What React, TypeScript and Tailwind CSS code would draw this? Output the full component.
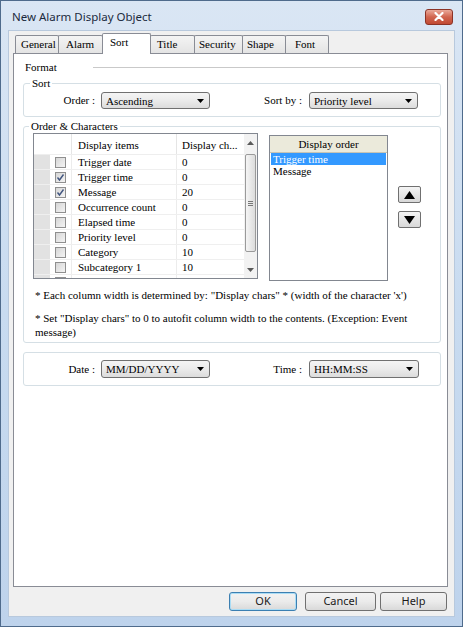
const serif = "[font-family:'Liberation_Serif','Times_New_Roman',serif] text-[11px] text-black"
const ui = "[font-family:'Noto_Sans','Liberation_Sans',sans-serif]"

const tabs = [
  { label: 'General', cls: 'w-[44px] pl-[5px]' },
  { label: 'Alarm', cls: 'w-[45px] pl-[7px]' },
  { label: 'Sort', cls: 'w-[49px] pl-[7px]', active: true },
  { label: 'Title', cls: 'w-[45px] pl-[6px]' },
  { label: 'Security', cls: 'w-[49px] pl-[4px]' },
  { label: 'Shape', cls: 'w-[44px] pl-[4px]' },
  { label: 'Font', cls: 'w-[44px] pl-[9px]' },
]

const items = [
  { name: 'Trigger date', chars: '0', checked: false },
  { name: 'Trigger time', chars: '0', checked: true },
  { name: 'Message', chars: '20', checked: true },
  { name: 'Occurrence count', chars: '0', checked: false },
  { name: 'Elapsed time', chars: '0', checked: false },
  { name: 'Priority level', chars: '0', checked: false },
  { name: 'Category', chars: '10', checked: false },
  { name: 'Subcategory 1', chars: '10', checked: false },
  { name: 'Subcategory 2', chars: '10', checked: false },
]

function DownTri({ w = 7, h = 4, color = '#000' }: { w?: number; h?: number; color?: string }) {
  return (
    <svg width={w} height={h} viewBox={`0 0 ${w} ${h}`}>
      <polygon points={`0,0 ${w},0 ${w / 2},${h}`} fill={color} />
    </svg>
  )
}

function UpTri({ w = 7, h = 4, color = '#000' }: { w?: number; h?: number; color?: string }) {
  return (
    <svg width={w} height={h} viewBox={`0 0 ${w} ${h}`}>
      <polygon points={`0,${h} ${w},${h} ${w / 2},0`} fill={color} />
    </svg>
  )
}

function Combo({ value, className }: { value: string; className: string }) {
  return (
    <div
      className={`flex items-center justify-between rounded-[3px] border border-[#707070] bg-linear-to-b from-[#f4f4f4] via-[#ebebeb] to-[#dcdcdc] pl-[4px] pr-[5px] ${className}`}
    >
      <span className="leading-[14px]">{value}</span>
      <DownTri />
    </div>
  )
}

function CheckBox({ checked }: { checked: boolean }) {
  return (
    <div className="flex h-[11px] w-[11px] items-center justify-center border border-[#8f8f8f] bg-linear-to-br from-[#d6d6d6] to-[#f4f4f4]">
      {checked && (
        <svg width="9" height="9" viewBox="0 0 9 9">
          <path d="M1.5 4.5 L3.5 7 L7.5 1.5" stroke="#41557f" strokeWidth="1.4" fill="none" />
        </svg>
      )}
    </div>
  )
}

function DlgButton({ label, className }: { label: string; className: string }) {
  return (
    <div
      className={`flex h-[19px] items-center justify-center rounded-[3px] border bg-linear-to-b from-[#f2f2f2] via-[#ebebeb] to-[#d9d9d9] text-[11px] text-[#1a1a1a] ${ui} ${className}`}
    >
      {label}
    </div>
  )
}

function ItemsTable() {
  return (
    <div className="flex h-[146px] w-[225px] overflow-hidden border border-[#828790] bg-white">
      <div className="w-[210px] overflow-hidden">
        <div className="flex h-[21px] border-b border-[#eeeeee]">
          <div className="w-[38px] border-r border-[#e5e5e5]" />
          <div className="w-[105px] border-r border-[#e5e5e5] pt-[4px] pl-[6px] leading-[14px]">Display items</div>
          <div className="flex-1 pt-[4px] pl-[5px] leading-[14px] whitespace-nowrap">Display ch...</div>
        </div>
        {items.map((it) => (
          <div key={it.name} className="flex h-[15px] border-b border-[#efefef]">
            <div className="w-[16px] bg-[#e2e2e2]" />
            <div className="flex w-[22px] items-center justify-center border-r border-[#ececec]">
              <CheckBox checked={it.checked} />
            </div>
            <div className="w-[105px] border-r border-[#ececec] pl-[6px] leading-[14px] whitespace-nowrap">{it.name}</div>
            <div className="flex-1 pl-[5px] leading-[14px]">{it.chars}</div>
          </div>
        ))}
      </div>
      <div className="flex w-[13px] flex-col bg-[#f2f2f2]">
        <div className="flex h-[17px] items-center justify-center">
          <UpTri w={7} h={4} color="#5a5a5a" />
        </div>
        <div className="mx-[1px] mt-[3px] flex h-[98px] items-center justify-center rounded-[2px] border border-[#9a9a9a] bg-linear-to-r from-[#f5f5f5] to-[#dcdcdc]">
          <div className="flex flex-col gap-[1px]">
            <div className="h-px w-[5px] bg-[#777]" />
            <div className="h-px w-[5px] bg-[#777]" />
            <div className="h-px w-[5px] bg-[#777]" />
          </div>
        </div>
        <div className="flex-1" />
        <div className="flex h-[17px] items-center justify-center">
          <DownTri w={7} h={4} color="#5a5a5a" />
        </div>
      </div>
    </div>
  )
}

function OrderList() {
  return (
    <div className="mt-[2px] ml-[11px] h-[146px] w-[119px] border border-[#828790] bg-white">
      <div className="h-[17px] border-b border-[#c7c4b4] bg-[#ebeadb] text-center leading-[16px]">Display order</div>
      <div className="px-[1px]">
        <div className="h-[12px] bg-[#3399ff] pl-[2px] leading-[12px] text-white">Trigger time</div>
        <div className="pl-[2px] leading-[13px]">Message</div>
      </div>
    </div>
  )
}

function ArrowButton({ up }: { up?: boolean }) {
  return (
    <div className="flex h-[17px] w-[23px] items-center justify-center rounded-[2px] border border-[#707070] bg-linear-to-b from-[#f4f4f4] to-[#d8d8d8]">
      {up ? <UpTri w={11} h={8} /> : <DownTri w={11} h={8} />}
    </div>
  )
}

export default function App() {
  return (
    <div className="flex h-[627px] w-[463px] flex-col border border-[#4f6b8c] bg-linear-to-b from-[#dae6f4] via-[#c8dbf0] to-[#bed3ec]">
      {/* title bar */}
      <div className="flex h-[29px] items-center justify-between pt-[2px] pr-[9px] pl-[11px]">
        <span className={`text-[11.5px] text-[#1b2a3d] ${ui}`}>New Alarm Display Object</span>
        <div className="flex h-[16px] w-[28px] items-center justify-center rounded-[3px] border border-[#8c3326] bg-linear-to-b from-[#e9a99a] via-[#d1654f] to-[#c14a33]">
          <svg width="10" height="9" viewBox="0 0 10 9">
            <path d="M1.5 1 L8.5 8 M8.5 1 L1.5 8" stroke="#ffffff" strokeWidth="2.2" strokeLinecap="round" />
          </svg>
        </div>
      </div>

      {/* client area */}
      <div className={`mx-[7px] mb-[9px] flex flex-1 flex-col border border-[#b8c9dd] bg-[#f0f0f0] pt-[2px] ${serif}`}>
        <div className="mr-[6px] ml-[4px]">
          <div className="flex h-[20px] items-end pl-[2px]">
            {tabs.map((t) =>
              t.active ? (
                <div
                  key={t.label}
                  className={`relative z-10 -mr-px -mb-px h-[21px] rounded-t-[2px] border border-b-0 border-[#898c95] bg-white pt-[1px] leading-[14px] ${t.cls}`}
                >
                  {t.label}
                </div>
              ) : (
                <div
                  key={t.label}
                  className={`-mr-px h-[18px] rounded-t-[2px] border border-b-0 border-[#898c95] bg-linear-to-b from-[#f4f4f4] to-[#e4e4e4] leading-[17px] ${t.cls}`}
                >
                  {t.label}
                </div>
              ),
            )}
          </div>

          <div className="h-[534px] border border-[#898c95] bg-white">
            {/* Format */}
            <div className="mt-[6px] flex h-[14px] items-center pr-[6px] pl-[11px]">
              <span className="w-[68px] leading-[14px]">Format</span>
              <div className="flex-1 border-t border-[#c9c9c9]" />
            </div>

            {/* Sort */}
            <fieldset className="mt-[2px] ml-[9px] w-[418px] rounded-[3px] border border-[#d5dfe5] pt-[2px] pb-[7px]">
              <legend className="ml-[6px] px-[2px] leading-[14px]">Sort</legend>
              <div className="flex items-center">
                <span className="w-[71px] text-right">Order :</span>
                <Combo value="Ascending" className="ml-[6px] h-[17px] w-[109px]" />
                <span className="w-[92px] text-right">Sort by :</span>
                <Combo value="Priority level" className="ml-[7px] h-[17px] w-[109px]" />
              </div>
            </fieldset>

            {/* Order & Characters */}
            <fieldset className="mt-[2px] ml-[9px] w-[418px] rounded-[3px] border border-[#d5dfe5] pb-[3px]">
              <legend className="ml-[5px] px-[2px] leading-[14px]">Order &amp; Characters</legend>
              <div className="flex items-start pl-[9px]">
                <ItemsTable />
                <OrderList />
                <div className="mt-[53px] ml-[10px] flex flex-col gap-[8px]">
                  <ArrowButton up />
                  <ArrowButton />
                </div>
              </div>
              <div className="mt-[7px] pl-[11px] leading-[14px]">
                <p>* Each column width is determined by: "Display chars" * (width of the character 'x')</p>
                <p className="mt-[9px]">
                  * Set "Display chars" to 0 to autofit column width to the contents. (Exception: Event
                  <br />
                  message)
                </p>
              </div>
            </fieldset>

            {/* Date / Time */}
            <div className="mt-[9px] ml-[9px] flex w-[418px] items-center rounded-[3px] border border-[#d5dfe5] pt-[7px] pb-[7px]">
              <span className="w-[71px] text-right">Date :</span>
              <Combo value="MM/DD/YYYY" className="ml-[6px] h-[18px] w-[109px]" />
              <span className="w-[92px] text-right">Time :</span>
              <Combo value="HH:MM:SS" className="ml-[7px] h-[18px] w-[110px]" />
            </div>
          </div>
        </div>

        {/* buttons */}
        <div className="mt-[5px] flex justify-end pr-[7px]">
          <DlgButton label="OK" className="w-[68px] border-[#3c7fb1] shadow-[inset_0_0_0_1px_#a9dcf5]" />
          <DlgButton label="Cancel" className="ml-[8px] w-[71px] border-[#707070]" />
          <DlgButton label="Help" className="ml-[4px] w-[67px] border-[#707070]" />
        </div>
      </div>
    </div>
  )
}
